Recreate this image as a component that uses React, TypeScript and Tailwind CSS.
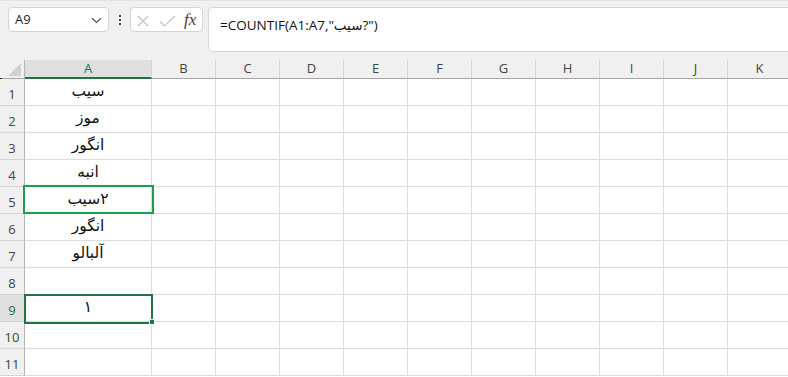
import React from "react";

const COLS = ["B", "C", "D", "E", "F", "G", "H", "I", "J", "K"];
const DATA: string[][] = [
  ["سیب"],
  ["موز"],
  ["انگور"],
  ["انبه"],
  ["سیب", "۲"],
  ["انگور"],
  ["آلبالو"],
  [],
  ["١"],
  [],
  [],
];

const UI_FONT = "font-['Open_Sans','Noto_Sans',sans-serif]";

function NameBox() {
  return (
    <div className="w-[101px] h-[25px] rounded-[4px] border border-[#d4d4d4] bg-white flex items-center justify-between pl-[6px] pr-[6px] shrink-0">
      <span className="text-[13px] text-[#222] leading-none">A9</span>
      <svg width="11" height="7" viewBox="0 0 11 7" className="mt-[1px]">
        <path d="M1 1.2 L5.5 5.5 L10 1.2" fill="none" stroke="#555" strokeWidth="1.2" />
      </svg>
    </div>
  );
}

function Dots() {
  return (
    <div className="w-[21px] h-[25px] flex flex-col items-center justify-center gap-[2px] shrink-0">
      <div className="w-[2px] h-[2px] bg-[#444]" />
      <div className="w-[2px] h-[2px] bg-[#444]" />
      <div className="w-[2px] h-[2px] bg-[#444]" />
    </div>
  );
}

function FxBox() {
  return (
    <div className="w-[73px] h-[25px] rounded-[4px] border border-[#d4d4d4] bg-white flex items-center pl-[6px] shrink-0">
      <svg width="12" height="12" viewBox="0 0 12 12" className="mt-[2px]">
        <path d="M1 1 L11 11 M11 1 L1 11" stroke="#c2c2c2" strokeWidth="1.1" fill="none" />
      </svg>
      <svg width="17" height="12" viewBox="0 0 17 12" className="ml-[10px] mt-[2px]">
        <path d="M1 6.5 L5.5 11 L16 1" stroke="#c2c2c2" strokeWidth="1.1" fill="none" />
      </svg>
      <span className="ml-[8px] text-[17px] italic leading-none text-[#444] font-['Liberation_Serif','DejaVu_Serif',serif] -mt-[1px]">
        fx
      </span>
    </div>
  );
}

function TopBar() {
  return (
    <div className="h-[60px] bg-[#f0f0f0] border-t border-[#e2e2e2] flex items-start pt-[6px] pl-[8px]">
      <NameBox />
      <Dots />
      <FxBox />
      <div className="ml-[5px] w-[620px] h-[45px] rounded-[4px] border border-[#d4d4d4] bg-white pl-[11px] pt-[4px] shrink-0">
        <span className="text-[13.5px] leading-[20px] text-[#111] font-['Open_Sans','DejaVu_Sans',sans-serif]">
          =COUNTIF(A1:A7,"سیب?")
        </span>
      </div>
    </div>
  );
}

function HeaderRow() {
  return (
    <div className="flex h-[19px] bg-[#f0f0f0]">
      <div className="w-[25px] h-[19px] border-r border-[#b4b4b4] border-b border-b-[#a6a6a6] flex items-end justify-end pr-[3px] pb-[2px] shrink-0">
        <svg width="13" height="13" viewBox="0 0 13 13">
          <path d="M13 0 L13 13 L0 13 Z" fill="#d0d0d0" />
        </svg>
      </div>
      <div className="w-[127px] h-[19px] bg-[#dfdfdf] border-b-2 border-[#217346] border-r border-r-[#d4d4d4] flex items-center justify-center text-[13px] text-[#217346] shrink-0">
        A
      </div>
      {COLS.map((c) => (
        <div
          key={c}
          className="w-[64px] h-[19px] border-r border-[#d8d8d8] border-b border-b-[#a6a6a6] flex items-center justify-center text-[13px] text-[#444] shrink-0"
        >
          {c}
        </div>
      ))}
    </div>
  );
}

function Row({ n, parts }: { n: number; parts: string[] }) {
  const sel = n === 9;
  return (
    <div className="flex h-[27px]">
      <div
        className={
          sel
            ? "w-[25px] h-[27px] bg-[#dfdfdf] border-r border-[#b4b4b4] border-b border-b-[#d4d4d4] flex items-end justify-center pb-[3px] text-[13px] leading-[16px] text-[#217346] shrink-0"
            : "w-[25px] h-[27px] bg-[#f0f0f0] border-r border-[#b4b4b4] border-b border-b-[#d4d4d4] flex items-end justify-center pb-[3px] text-[13px] leading-[16px] text-[#444] shrink-0"
        }
      >
        {n}
      </div>
      <div className="w-[127px] h-[27px] border-r border-b border-[#dcdcdc] flex items-center justify-center text-[15.5px] text-[#111] font-['DejaVu_Sans','Noto_Sans',sans-serif] shrink-0">
        {parts.map((p, i) => (
          <span key={i}>{p}</span>
        ))}
      </div>
      {COLS.map((c) => (
        <div key={c} className="w-[64px] h-[27px] border-r border-b border-[#dcdcdc] shrink-0" />
      ))}
    </div>
  );
}

export default function App() {
  return (
    <div className={`relative w-[788px] h-[377px] overflow-hidden bg-white ${UI_FONT}`}>
      <TopBar />
      <HeaderRow />
      {DATA.map((v, i) => (
        <Row key={i} n={i + 1} parts={v} />
      ))}
      <div className="absolute left-0 top-[78px] w-[2px] h-[1px] bg-[#222]" />
      <div className="absolute left-[23px] top-[185px] w-[131px] h-[29px] border-2 border-[#1aa04a]" />
      <div className="absolute left-[24px] top-[294px] w-[129px] h-[30px] border-2 border-[#217346]" />
      <div className="absolute left-[149px] top-[319px] w-[6px] h-[6px] bg-[#217346] border border-white" />
    </div>
  );
}
